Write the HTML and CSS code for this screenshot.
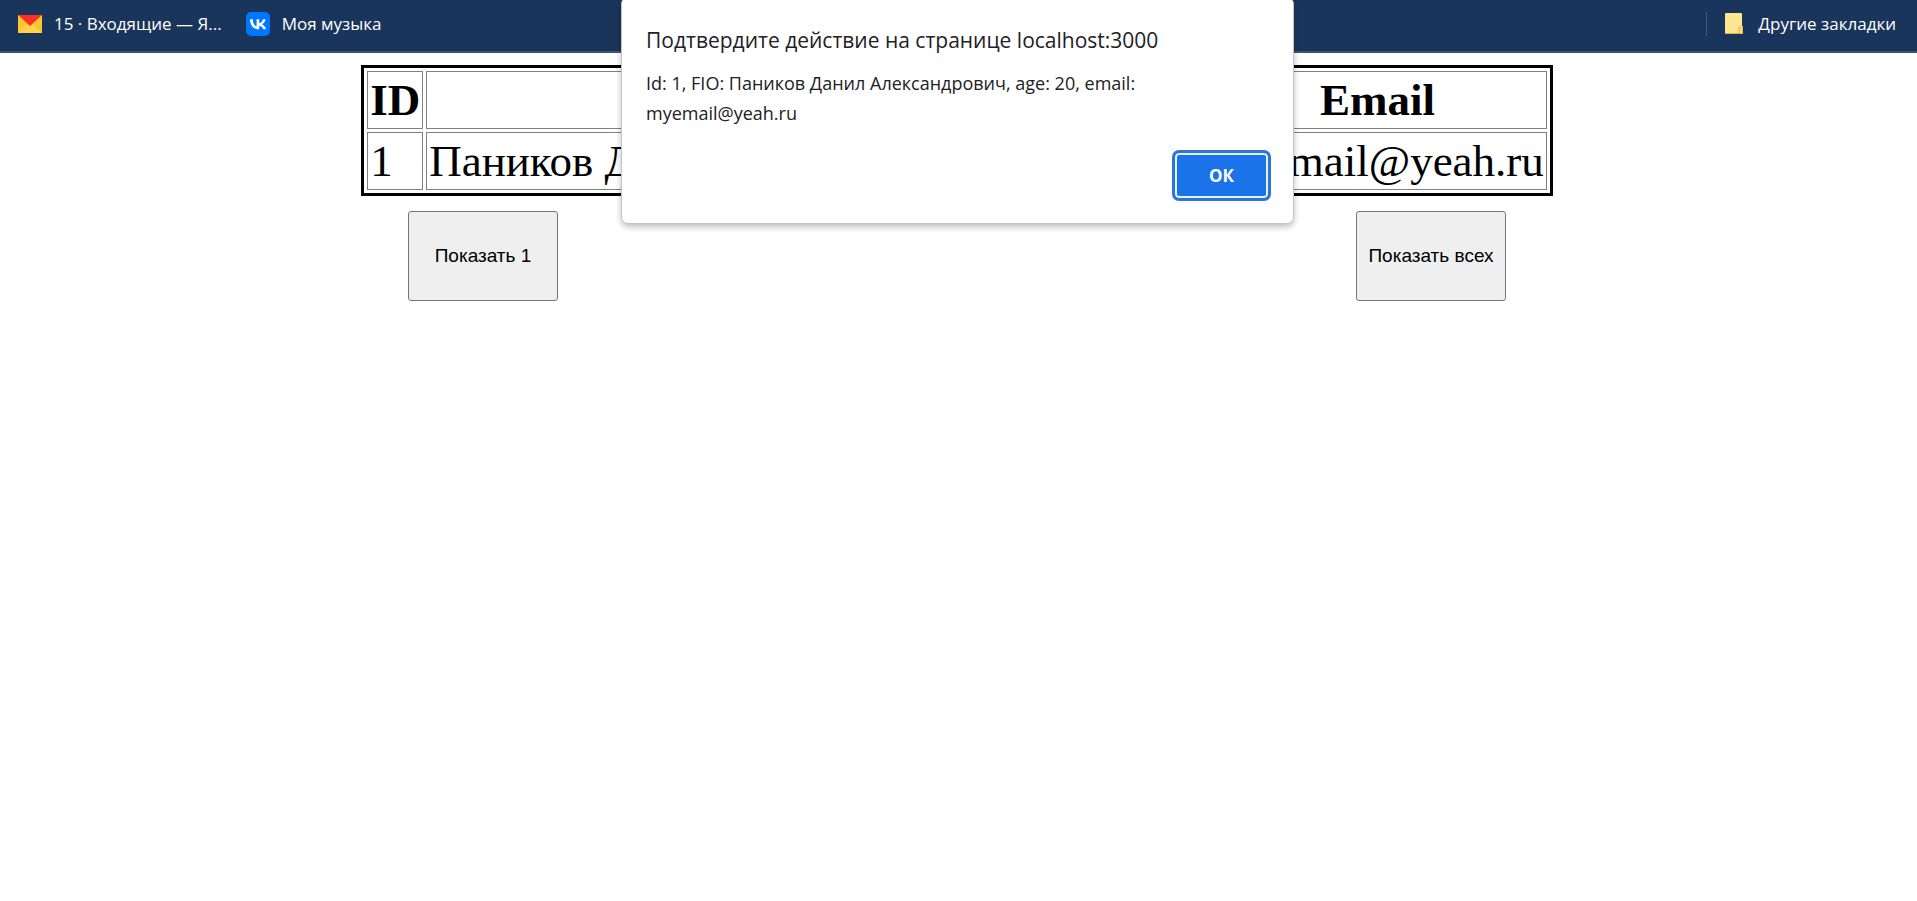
FILE: index.html
```html
<!DOCTYPE html>
<html lang="ru">
<head>
<meta charset="utf-8">
<title>localhost:3000</title>
<link rel="stylesheet" href="styles.css">
</head>
<body>
<nav class="bookmarks" aria-label="Закладки">
  <a class="bookmark" href="#mail">
    <svg width="24" height="24" viewBox="0 0 24 24" aria-hidden="true">
      <rect y="3" width="24" height="18" fill="#ffcc33"/>
      <path d="M0 21V4L11 14.500L0 21Z" fill="#fdc52f"/>
      <path d="M24 21V4L13 14.500Z" fill="#fdc52f"/>
      <path d="M0 21L9 12h6l9 9Z" fill="#ffd24a"/>
      <path d="M0 3h24L12 14Z" fill="#fc3027"/>
    </svg>
    <span>15 · Входящие — Я...</span>
  </a>
  <a class="bookmark" href="#music">
    <svg width="24" height="24" viewBox="0 0 24 24" aria-hidden="true">
      <rect width="24" height="24" rx="5" fill="#0077ff"/>
      <path d="M12.800 17.300C7.300 17.300 4.200 13.600 4 7.300h2.800c.1 4.700 2.100 6.600 3.800 7V7.300h2.600v4c1.600-.2 3.300-2 3.800-4h2.600c-.4 2.500-2.200 4.200-3.500 5 1.300.6 3.300 2.200 4 5h-2.800c-.6-1.900-2.100-3.400-4.100-3.600v3.600Z" fill="#fff"/>
    </svg>
    <span>Моя музыка</span>
  </a>
  <a class="bookmark bookmark-other" href="#other">
    <svg width="24" height="24" viewBox="0 0 24 24" aria-hidden="true">
      <path d="M4 1h15a1 1 0 0 1 1 1v12h1v7a1 1 0 0 1-1 1H4a1 1 0 0 1-1-1V2a1 1 0 0 1 1-1Z" fill="#ffe590"/>
      <path d="M3 21.500h17.500V15H17v6" fill="none" stroke="#dcb53c"/>
    </svg>
    <span>Другие закладки</span>
  </a>
</nav>
<main class="page">
  <table class="people">
    <thead>
      <tr><th>ID</th><th>ФИО</th><th>Возраст</th><th>Email</th></tr>
    </thead>
    <tbody>
      <tr><td>1</td><td>Паников Данил Александрович</td><td>20</td><td>myemail@yeah.ru</td></tr>
    </tbody>
  </table>
  <div class="actions">
    <button class="action" type="button">Показать 1</button>
    <button class="action" type="button">Показать всех</button>
  </div>
</main>
<dialog class="alert" open aria-labelledby="alert-title">
  <h1 class="alert-title" id="alert-title">Подтвердите действие на странице localhost:3000</h1>
  <p class="alert-text">Id: 1, FIO: Паников Данил Александрович, age: 20, email: myemail@yeah.ru</p>
  <button class="alert-ok" type="button">ОК</button>
</dialog>
</body>
</html>
```
FILE: styles.css
```css
* { box-sizing: border-box; }
body {
  margin: 0;
  background: #fff;
  color: #000;
  font-family: "Liberation Serif", serif;
}
.bookmarks {
  display: flex;
  align-items: flex-start;
  gap: 24px;
  height: 53px;
  padding: 12px 21px 0 18px;
  background: #1a355b;
  border-bottom: 2px solid #3f5373;
}
.bookmark {
  display: flex;
  align-items: center;
  gap: 12px;
  height: 24px;
  color: #fff;
  font-family: "Open Sans", "Noto Sans", sans-serif;
  font-size: 17px;
  line-height: 24px;
  text-decoration: none;
  white-space: nowrap;
}
.bookmark-other {
  margin-left: auto;
  padding-left: 15px;
  border-left: 1px solid #435a7b;
}
.page { padding: 12px 12px 12px 9px; }
.people {
  margin: 0 auto;
  border: 3px solid #000;
  border-spacing: 3px;
  font-size: 45px;
}
.people th,
.people td {
  padding: 2px;
  border: 1px solid #808080;
  white-space: nowrap;
}
.actions {
  display: flex;
  justify-content: space-around;
  margin-top: 15px;
}
.action {
  width: 150px;
  height: 90px;
  padding: 0;
  border: 1px solid #767676;
  border-radius: 3px;
  background: #efefef;
  color: #000;
  font: 19px "Liberation Sans", sans-serif;
}
.alert {
  position: absolute;
  top: -3px;
  left: 0;
  right: 2px;
  display: flex;
  flex-direction: column;
  width: 673px;
  margin: 0 auto;
  padding: 27px 22px 22px 24px;
  border: 1px solid #c4c4c4;
  border-radius: 7px;
  background: #fff;
  box-shadow: 0 3px 6px rgba(0, 0, 0, 0.25);
  color: #202124;
  font-family: "Open Sans", "Noto Sans", sans-serif;
}
.alert-title {
  margin: 0 0 13px;
  font-size: 21px;
  font-weight: 400;
  line-height: 30px;
}
.alert-text {
  width: 530px;
  margin: 0 0 22px;
  font-size: 18px;
  line-height: 30px;
}
.alert-ok {
  align-self: flex-end;
  width: 99px;
  height: 51px;
  border: 3px solid #2a75dc;
  border-radius: 7px;
  background: #1a73e8;
  box-shadow: inset 0 0 0 2px #e8f0fe;
  color: #fff;
  font: 700 17px "Open Sans", "Noto Sans", sans-serif;
}
```
